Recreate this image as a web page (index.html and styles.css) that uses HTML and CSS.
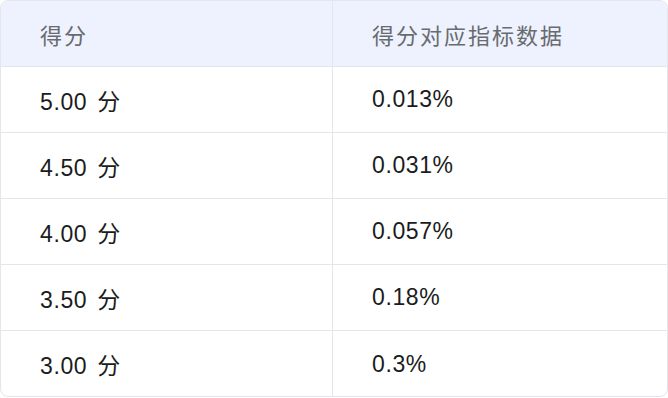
FILE: index.html
```html
<!DOCTYPE html>
<html lang="zh-CN">
<head>
<meta charset="utf-8">
<link rel="stylesheet" href="styles.css">
</head>
<body>
<div class="wrap">
  <table class="score-table">
    <thead>
      <tr><th>得分</th><th>得分对应指标数据</th></tr>
    </thead>
    <tbody>
      <tr><td>5.00 分</td><td>0.013%</td></tr>
      <tr><td>4.50 分</td><td>0.031%</td></tr>
      <tr><td>4.00 分</td><td>0.057%</td></tr>
      <tr><td>3.50 分</td><td>0.18%</td></tr>
      <tr><td>3.00 分</td><td>0.3%</td></tr>
    </tbody>
  </table>
</div>
</body>
</html>
```
FILE: styles.css
```css
html, body {
  margin: 0;
  padding: 0;
  background: #ffffff;
}
.wrap {
  width: 668px;
  height: 397px;
  box-sizing: border-box;
  border: 1px solid #e5e6eb;
  border-radius: 8px;
  overflow: hidden;
}
.score-table {
  width: 100%;
  border-collapse: separate;
  border-spacing: 0;
  table-layout: fixed;
  font-family: "Liberation Sans", "Noto Sans CJK SC", sans-serif;
}
.score-table th,
.score-table td {
  height: 66px;
  padding: 0 0 0 39px;
  text-align: left;
  vertical-align: middle;
  box-sizing: border-box;
  border-bottom: 1px solid #e5e6eb;
}
.score-table th:first-child,
.score-table td:first-child {
  width: 332px;
  border-right: 1px solid #e5e6eb;
}
.score-table th {
  background: #eef2fe;
  color: #686b70;
  font-weight: 400;
  font-size: 22px;
  letter-spacing: 2px;
}
.score-table td {
  color: #1a1c20;
  font-size: 23px;
  letter-spacing: 0.6px;
  word-spacing: 3px;
}
.score-table tbody tr:last-child td {
  border-bottom: none;
}
```
